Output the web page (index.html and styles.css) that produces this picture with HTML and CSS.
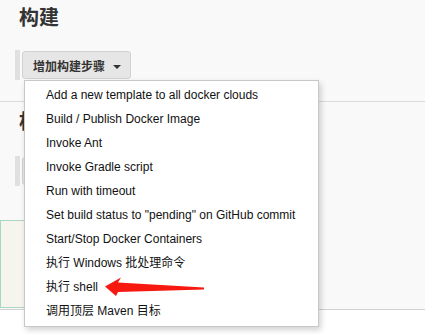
FILE: index.html
```html
<!DOCTYPE html>
<html lang="zh-CN">
<head>
    <meta charset="UTF-8">
    <title>构建</title>
    <link rel="stylesheet" href="styles.css">
</head>
<body>
    <div class="screen">
        <div class="page">
            <div class="section">
                <h2 class="section-title">构建</h2>
                <div class="step-bar">
                    <button class="add-btn">增加构建步骤 <span class="caret"></span></button>
                </div>
            </div>

            <div class="section next">
                <h2 class="section-title">构建后操作</h2>
                <div class="step-bar">
                    <button class="add-btn">增加构建后操作步骤 <span class="caret"></span></button>
                </div>
                <div class="notice"></div>
            </div>
        </div>

        <!-- dropdown opened from the add step button -->
        <ul class="menu">
            <li>Add a new template to all docker clouds</li>
            <li>Build / Publish Docker Image</li>
            <li>Invoke Ant</li>
            <li>Invoke Gradle script</li>
            <li>Run with timeout</li>
            <li>Set build status to "pending" on GitHub commit</li>
            <li>Start/Stop Docker Containers</li>
            <li>执行 Windows 批处理命令</li>
            <li>执行 shell</li>
            <li>调用顶层 Maven 目标</li>
        </ul>

        <svg class="arrow" width="110" height="24" viewBox="100 275 110 24" xmlns="http://www.w3.org/2000/svg">
            <polygon points="105,286.5 121,277.5 118,282.5 204,287.5 204,289.5 118,292 116,296" fill="#f7190f"/>
        </svg>
    </div>
</body>
</html>
```

FILE: styles.css
```css
body {
    margin: 0;
    background-color: #ffffff;
    font-family: "Liberation Sans", "Noto Sans CJK SC", sans-serif;
    color: #222;
}
.screen {
    position: relative;
    height: 334px;
    overflow: hidden;
}
.page {
    height: 309px;
    background-color: #f9f9f9;
    border-bottom: 1px solid #d0d0d0;
}
.section-title {
    margin: 0;
    padding: 4px 0 0 19px;
    font-size: 20px;
    line-height: 28px;
    font-weight: bold;
    color: #333;
}
.step-bar {
    margin: 18px 0 0 15px;
    border-left: 5px solid #e0e0e0;
    padding: 1px 0 1px 2px;
    height: 28px;
}
.add-btn {
    height: 28px;
    padding: 0 9px 0 10px;
    background-color: #e6e6e6;
    border: 1px solid #d2d2d2;
    border-radius: 3px;
    font-family: "Liberation Sans", "Noto Sans CJK SC", sans-serif;
    font-size: 12px;
    font-weight: bold;
    color: #333;
}
.caret {
    display: inline-block;
    width: 0;
    height: 0;
    margin-left: 5px;
    vertical-align: middle;
    border-left: 4px solid transparent;
    border-right: 4px solid transparent;
    border-top: 4px solid #333;
}
.section.next {
    margin-top: 21px;
    border-top: 1px solid #dcdcdc;
}
.section.next .section-title {
    padding-top: 6px;
}
.section.next .step-bar {
    margin-top: 20px;
}
.notice {
    margin-top: 34px;
    width: 300px;
    height: 86px;
    background-color: #f5f5ee;
    border: 1px solid #a9d8c0;
}
.menu {
    position: absolute;
    left: 24px;
    top: 80px;
    width: 293px;
    margin: 0;
    padding: 2px 0 3px;
    list-style: none;
    background-color: #fff;
    border: 1px solid #c8c8c8;
    box-shadow: 2px 3px 6px rgba(0,0,0,0.18);
    font-size: 12px;
    color: #111;
}
.menu li {
    height: 24px;
    line-height: 24px;
    padding-left: 21px;
    white-space: nowrap;
}
.arrow {
    position: absolute;
    left: 100px;
    top: 275px;
}
```
